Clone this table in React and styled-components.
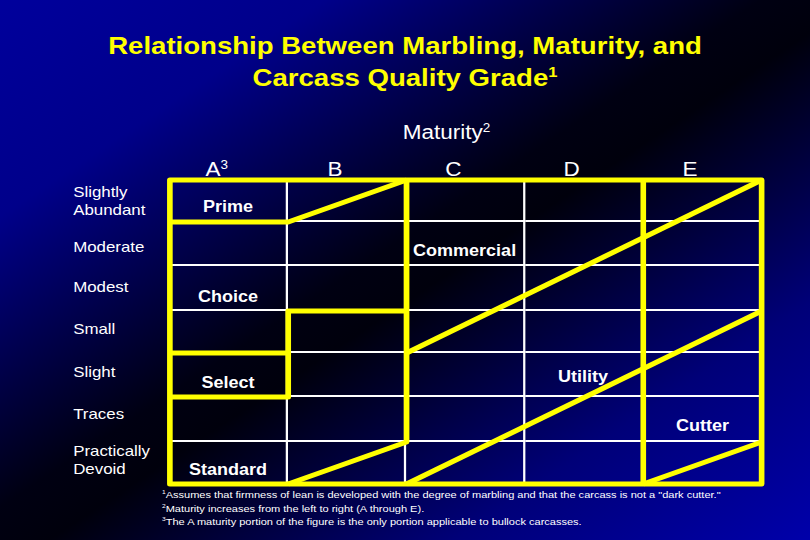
import React from 'react';
import styled, { createGlobalStyle } from 'styled-components';

// the slide was 4:3 and got stretched to 810 wide, so it is drawn at 720 and scaled
const ROWS = [42, 44, 45, 42, 44, 45, 42];
const COLS = ['A', 'B', 'C', 'D', 'E'];

const marbling = [
  { text: ['Slightly', 'Abundant'], dy: 0 },
  { text: ['Moderate'], dy: 3 },
  { text: ['Modest'], dy: -1 },
  { text: ['Small'], dy: -3 },
  { text: ['Slight'], dy: -3 },
  { text: ['Traces'], dy: -5 },
  { text: ['Practically', 'Devoid'], dy: -3 },
];

// grade names, keyed by "row-col"
const grades = {
  '0-0': { name: 'Prime', dy: 7 },
  '1-2': { name: 'Commercial', dy: 7.5 },
  '2-0': { name: 'Choice', dy: 9 },
  '4-3': { name: 'Utility', dy: 3 },
  '4-0': { name: 'Select', dy: 8.5 },
  '5-4': { name: 'Cutter', dy: 7 },
  '6-0': { name: 'Standard', dy: 6.5 },
};

const GlobalStyle = createGlobalStyle`
  html, body {
    margin: 0;
    padding: 0;
  }
  body {
    width: 810px;
    height: 540px;
    overflow: hidden;
    font-family: "Liberation Sans", Arial, sans-serif;
  }
`;

const Page = styled.div`
  width: 810px;
  height: 540px;
  overflow: hidden;
  background: linear-gradient(
    to bottom right,
    #00009c 0%,
    #00008a 20%,
    #000012 47%,
    #00000c 53%,
    #000078 78%,
    #0000aa 100%
  );
`;

const Slide = styled.div`
  width: 720px;
  height: 540px;
  transform: scaleX(1.125);
  transform-origin: 0 0;
  display: flex;
  flex-direction: column;
  color: #ffffff;
`;

const Title = styled.h1`
  margin: 0;
  padding-top: 30px;
  font-size: 24.5px;
  line-height: 32px;
  font-weight: bold;
  color: #ffff00;
  text-align: center;
`;

const Sup = styled.sup`
  font-size: ${p => p.$size || '0.6em'};
  vertical-align: baseline;
  position: relative;
  top: -0.6em;
  line-height: 0;
`;

const Maturity = styled.div`
  margin-top: 26px;
  padding-left: 358px;
  font-size: 20px;
  line-height: 24px;
`;

const HeaderRow = styled.div`
  margin: 14px 0 0 151px;
  width: 526px;
  height: 22px;
  display: grid;
  grid-template-columns: repeat(5, 1fr);
`;

const ColHead = styled.div`
  text-align: center;
  padding-right: 22px;
  font-size: 20px;
  line-height: 22px;
`;

const Chart = styled.div`
  display: flex;
  padding-left: 65px;
`;

const RowLabels = styled.div`
  width: 86px;
  display: grid;
  grid-template-rows: ${ROWS.map(r => r + 'px').join(' ')};
`;

const RowLabel = styled.div`
  display: flex;
  align-items: center;
  font-size: 15px;
  line-height: 18.5px;
`;

const Shift = styled.span`
  display: block;
  transform: translateY(${p => p.$dy}px);
`;

const Grid = styled.div`
  position: relative;
  width: 526px;
  height: 304px;
  display: grid;
  grid-template-columns: repeat(5, 1fr);
  grid-template-rows: ${ROWS.map(r => r + 'px').join(' ')};
`;

const Cell = styled.div`
  display: flex;
  align-items: center;
  justify-content: center;
  border-right: ${p => (p.$lastCol ? 'none' : '2px solid #ffffff')};
  border-bottom: ${p => (p.$lastRow ? 'none' : '2px solid #ffffff')};
`;

const Grade = styled.span`
  font-size: 16px;
  font-weight: bold;
  white-space: nowrap;
  transform: translateY(${p => p.$dy}px);
`;

const Lines = styled.svg`
  position: absolute;
  left: 0;
  top: 0;
  width: 100%;
  height: 100%;
  overflow: visible;
`;

const Notes = styled.div`
  margin-top: 4px;
  padding-left: 144px;
  font-size: 9.8px;
  line-height: 13.5px;
`;

const c = i => (526 / 5) * i;
const r = i => ROWS.slice(0, i).reduce((a, b) => a + b, 0);

const GradeLines = () => (
  <Lines viewBox="0 0 526 304" preserveAspectRatio="none">
    <g fill="none" stroke="#ffff00" strokeWidth="5" strokeLinejoin="round">
      <rect x="0" y="0" width="526" height="304" />
      <path d={`M0 ${r(1)} L${c(1)} ${r(1)} L${c(2)} 0`} />
      <path d={`M${c(2)} 0 L${c(2)} ${r(6)} L${c(1)} ${r(7)}`} />
      <path d={`M${c(2)} ${r(3)} L${c(1)} ${r(3)} L${c(1)} ${r(5)} L0 ${r(5)}`} />
      <path d={`M0 ${r(4)} L${c(1)} ${r(4)}`} />
      <path d={`M${c(5)} 0 L${c(2)} ${r(4)}`} />
      <path d={`M${c(5)} ${r(3)} L${c(2)} ${r(7)}`} />
      <path d={`M${c(4)} 0 L${c(4)} ${r(7)}`} />
      <path d={`M${c(5)} ${r(6)} L${c(4)} ${r(7)}`} />
    </g>
  </Lines>
);

export default function App() {
  return (
    <Page>
      <GlobalStyle />
      <Slide>
        <Title>
          Relationship Between Marbling, Maturity, and
          <br />
          Carcass Quality Grade<Sup>1</Sup>
        </Title>

        <Maturity>
          Maturity<Sup>2</Sup>
        </Maturity>

        <HeaderRow>
          {COLS.map(col => (
            <ColHead key={col}>
              {col}
              {col === 'A' && <Sup>3</Sup>}
            </ColHead>
          ))}
        </HeaderRow>

        <Chart>
          <RowLabels>
            {marbling.map(m => (
              <RowLabel key={m.text[0]}>
                <Shift $dy={m.dy}>
                  {m.text.map((t, i) => (
                    <React.Fragment key={t}>
                      {i > 0 && <br />}
                      {t}
                    </React.Fragment>
                  ))}
                </Shift>
              </RowLabel>
            ))}
          </RowLabels>

          <Grid>
            {ROWS.map((_, ri) =>
              COLS.map((_, ci) => {
                const g = grades[`${ri}-${ci}`];
                return (
                  <Cell key={`${ri}-${ci}`} $lastCol={ci === 4} $lastRow={ri === 6}>
                    {g && <Grade $dy={g.dy}>{g.name}</Grade>}
                  </Cell>
                );
              })
            )}
            <GradeLines />
          </Grid>
        </Chart>

        <Notes>
          <div>
            <Sup>1</Sup>Assumes that firmness of lean is developed with the degree of marbling and that the carcass is not a "dark cutter."
          </div>
          <div>
            <Sup>2</Sup>Maturity increases from the left to right (A through E).
          </div>
          <div>
            <Sup>3</Sup>The A maturity portion of the figure is the only portion applicable to bullock carcasses.
          </div>
        </Notes>
      </Slide>
    </Page>
  );
}
